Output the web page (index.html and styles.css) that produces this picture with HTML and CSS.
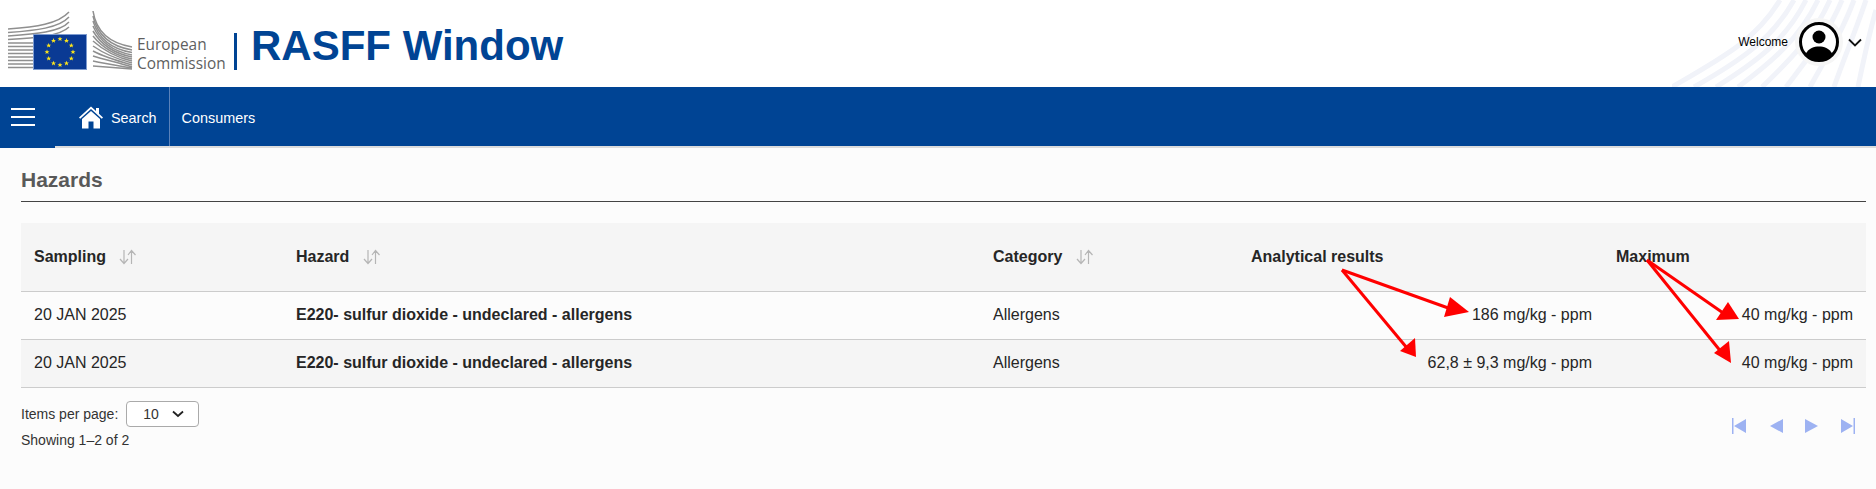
FILE: index.html
```html
<!DOCTYPE html>
<html lang="en">
<head>
  <meta charset="UTF-8">
  <title>RASFF Window</title>
  <link rel="stylesheet" href="styles.css">
</head>
<body>
  <header class="top">
    <svg class="swoosh" width="204" height="87" viewBox="0 0 204 87" fill="none">
      <path d="M0 87 C50 58 84 40 108 0"/>
      <path d="M22 87 C66 62 100 40 122 0"/>
      <path d="M44 87 C84 62 114 40 134 0"/>
      <path d="M66 87 C100 62 128 38 146 0"/>
      <path d="M90 87 C118 60 142 36 158 0"/>
      <path d="M114 87 C136 58 156 34 170 0"/>
      <path d="M138 87 C154 58 170 32 182 0"/>
      <path d="M162 87 C172 58 184 30 194 0"/>
      <path d="M186 87 C192 58 198 30 204 10"/>
    </svg>
    <div class="brand">
      <svg class="ec-logo" width="125" height="62" viewBox="0 0 125 62" fill="none">
        <g class="ec-lines">
          <path d="M0 18 C28 16 50 13 61 1"/>
          <path d="M0 21.5 C28 19.5 51 17 61 6"/>
          <path d="M0 25 C28 23 52 21 61 11"/>
          <path d="M0 28.5 C28 27 52 25 61 16"/>
          <path d="M0 32 H25"/>
          <path d="M0 35.5 H25"/>
          <path d="M0 39 H25"/>
          <path d="M0 42.5 H25"/>
          <path d="M0 46 H25"/>
          <path d="M0 49.5 H25"/>
          <path d="M0 53 H25"/>
          <path d="M0 56.5 H25"/>
          <path d="M85 0 C88 20 100 32 124 36"/>
          <path d="M85 5 C89 23 101 35 124 39"/>
          <path d="M85 10 C90 26 102 38 124 41.5"/>
          <path d="M85 15 C91 29 103 40 124 44"/>
          <path d="M85 20 C92 32 104 42 124 46"/>
          <path d="M85 25 C93 35 105 44 124 48"/>
          <path d="M85 30 C94 38 106 46 124 50"/>
          <path d="M85 35 C95 42 108 48 124 52"/>
          <path d="M85 40 C96 46 110 50 124 54"/>
          <path d="M85 45 C98 49 112 52 124 56"/>
          <path d="M85 50 C98 53 112 55 124 57"/>
          <path d="M85 55 C98 56 112 57 124 58"/>
        </g>
        <rect class="ec-flag" x="25.5" y="23.5" width="53" height="35"/>
        <defs>
          <polygon id="star" points="0,-2.6 .7,-.8 2.5,-.8 1.1,.3 1.6,2.1 0,1 -1.6,2.1 -1.1,.3 -2.5,-.8 -.7,-.8"/>
        </defs>
        <g class="ec-stars" transform="translate(52 41)">
          <use href="#star" x="0" y="-13"/>
          <use href="#star" x="6.5" y="-11.3"/>
          <use href="#star" x="11.3" y="-6.5"/>
          <use href="#star" x="13" y="0"/>
          <use href="#star" x="11.3" y="6.5"/>
          <use href="#star" x="6.5" y="11.3"/>
          <use href="#star" x="0" y="13"/>
          <use href="#star" x="-6.5" y="11.3"/>
          <use href="#star" x="-11.3" y="6.5"/>
          <use href="#star" x="-13" y="0"/>
          <use href="#star" x="-11.3" y="-6.5"/>
          <use href="#star" x="-6.5" y="-11.3"/>
        </g>
      </svg>
      <div class="ec-name">European<br>Commission</div>
      <div class="brand-rule"></div>
      <div class="app-title">RASFF Window</div>
    </div>
    <div class="user">
      <span class="welcome">Welcome</span>
      <svg class="avatar" width="48" height="48" viewBox="0 0 48 48">
        <circle cx="24" cy="24" r="24" fill="#f6f6f6"/>
        <circle cx="24" cy="24" r="18.5" fill="#fff" stroke="#000" stroke-width="3"/>
        <circle cx="24" cy="19" r="6.5" fill="#000"/>
        <path d="M10.5 36 C14 30 19 28.5 24 28.5 C29 28.5 34 30 37.5 36 C34 40 29 42 24 42 C19 42 14 40 10.5 36 Z" fill="#000"/>
      </svg>
      <svg class="user-caret" width="14" height="9" viewBox="0 0 14 9" fill="none">
        <path d="M1 1.5 L7 7.5 L13 1.5"/>
      </svg>
    </div>
  </header>

  <nav class="nav">
    <div class="nav-burger">
      <span></span><span></span><span></span>
    </div>
    <a class="nav-item nav-home">
      <svg width="24" height="24" viewBox="0 0 24 24">
        <path d="M12 1.5 L17 6 V3 H20 V8.8 L24 12.6 L22.8 13.8 L12 4 L1.2 13.8 L0 12.6 Z" fill="#fff"/>
        <path d="M12 6 L21 14 V23.5 H14.5 V16.5 H9.5 V23.5 H3 V14 Z" fill="#fff"/>
      </svg>
      Search
    </a>
    <a class="nav-item">Consumers</a>
  </nav>

  <main class="content">
    <h2 class="section-title">Hazards</h2>

    <div class="table-wrap">
      <table class="hazards">
        <thead>
          <tr>
            <th class="col-sampling">Sampling <svg class="sort" width="18" height="16" viewBox="0 0 18 16" fill="none"><path d="M5 1 V14 M1 10 L5 14.5 L9 10 M12.5 15 V2 M9 6 L12.5 1.5 L16.5 6"/></svg></th>
            <th class="col-hazard">Hazard <svg class="sort" width="18" height="16" viewBox="0 0 18 16" fill="none"><path d="M5 1 V14 M1 10 L5 14.5 L9 10 M12.5 15 V2 M9 6 L12.5 1.5 L16.5 6"/></svg></th>
            <th class="col-category">Category <svg class="sort" width="18" height="16" viewBox="0 0 18 16" fill="none"><path d="M5 1 V14 M1 10 L5 14.5 L9 10 M12.5 15 V2 M9 6 L12.5 1.5 L16.5 6"/></svg></th>
            <th class="col-result">Analytical results</th>
            <th class="col-max">Maximum</th>
          </tr>
        </thead>
        <tbody>
          <tr>
            <td>20 JAN 2025</td>
            <td class="hazard-name">E220- sulfur dioxide - undeclared - allergens</td>
            <td>Allergens</td>
            <td class="num num-result">186 mg/kg - ppm</td>
            <td class="num">40 mg/kg - ppm</td>
          </tr>
          <tr class="alt">
            <td>20 JAN 2025</td>
            <td class="hazard-name">E220- sulfur dioxide - undeclared - allergens</td>
            <td>Allergens</td>
            <td class="num num-result">62,8 ± 9,3 mg/kg - ppm</td>
            <td class="num">40 mg/kg - ppm</td>
          </tr>
        </tbody>
      </table>

      <!-- annotation drawn over the table, coordinates are relative to the table corner -->
      <svg class="arrows" width="1845" height="164" viewBox="0 0 1845 164">
        <g class="arrow-lines">
          <path d="M1321 47 L1430 86"/>
          <path d="M1321 47 L1386 125"/>
          <path d="M1626 37 L1705 92"/>
          <path d="M1626 37 L1701 130"/>
        </g>
        <polygon points="1448,89 1423,94 1429,74"/>
        <polygon points="1395,134 1379,128 1394,115"/>
        <polygon points="1718,96 1695,97 1707,79"/>
        <polygon points="1710,140 1693,130 1708,118"/>
      </svg>
    </div>

    <div class="pager">
      <div class="pager-info">
        <div class="per-page">
          <span>Items per page:</span>
          <div class="select">
            10
            <svg width="12" height="8" viewBox="0 0 12 8" fill="none"><path d="M1 1.5 L6 6 L11 1.5"/></svg>
          </div>
        </div>
        <div class="showing">Showing 1–2 of 2</div>
      </div>
      <div class="pager-nav">
        <svg width="15" height="16" viewBox="0 0 15 16"><path d="M0 0 H1.5 V16 H0 Z M14 1 V15 L2 8 Z"/></svg>
        <svg width="14" height="16" viewBox="0 0 14 16"><path d="M14 1 V15 L1 8 Z"/></svg>
        <svg width="14" height="16" viewBox="0 0 14 16"><path d="M0 1 V15 L13 8 Z"/></svg>
        <svg width="14" height="16" viewBox="0 0 14 16"><path d="M12.5 0 H14 V16 H12.5 Z M0 1 V15 L12 8 Z"/></svg>
      </div>
    </div>
  </main>
</body>
</html>
```

FILE: styles.css
```css
* {
  box-sizing: border-box;
}
body {
  margin: 0;
  font-family: "Liberation Sans", Arial, sans-serif;
  background-color: #fcfcfc;
  color: #262626;
}

/* header */
.top {
  height: 87px;
  background-color: #fff;
  position: relative;
  display: flex;
  justify-content: space-between;
  align-items: flex-start;
  overflow: hidden;
}
.swoosh {
  position: absolute;
  right: 0;
  top: 0;
}
.swoosh path {
  stroke: #f1f3f9;
  stroke-width: 5;
}
.brand {
  display: flex;
  align-items: flex-start;
  padding: 11px 0 0 8px;
}
.ec-lines path {
  stroke: #8f8f8f;
  stroke-width: 1.5;
}
.ec-flag {
  fill: #0a3a94;
  stroke: #7d9bd0;
  stroke-width: 1;
}
.ec-stars {
  fill: #ffe619;
}
.ec-name {
  margin: 24px 0 0 4px;
  width: 97px;
  font-family: "Open Sans", sans-serif;
  font-size: 15.4px;
  line-height: 19px;
  color: #5f5f5f;
}
.brand-rule {
  width: 3px;
  height: 37px;
  margin-top: 22px;
  background-color: #004494;
}
.app-title {
  margin: 10px 0 0 14px;
  font-size: 42px;
  line-height: 50px;
  font-weight: bold;
  color: #004494;
}
.user {
  position: relative;
  display: flex;
  align-items: center;
  padding: 18px 14px 0 0;
}
.welcome {
  font-size: 12px;
  color: #000;
  margin-right: 7px;
}
.user-caret {
  margin-left: 5px;
}
.user-caret path {
  stroke: #111;
  stroke-width: 1.8;
}

/* nav bar */
.nav {
  height: 61px;
  background-color: #004494;
  border-bottom: 2px solid #dcdcdc;
  display: flex;
  align-items: stretch;
  color: #fff;
  font-size: 14.4px;
}
.nav-burger {
  width: 55px;
  margin-bottom: -2px;
  border-bottom: 2px solid #004494;
  padding: 21px 0 0 11px;
}
.nav-burger span {
  display: block;
  width: 24px;
  height: 2px;
  margin-bottom: 6px;
  background-color: #fff;
}
.nav-item {
  display: flex;
  align-items: center;
  padding: 2px 12px 0 12px;
}
.nav-home {
  padding-left: 24px;
  gap: 8px;
  border-right: 1px solid #5a82ba;
}
.nav-home svg {
  margin-top: -2px;
}

/* hazards block */
.content {
  padding: 0 10px 0 21px;
}
.section-title {
  margin: 0;
  padding: 20px 0 8px;
  height: 54px;
  font-size: 21px;
  line-height: 24px;
  color: #595959;
  border-bottom: 1px solid #444;
}
.table-wrap {
  position: relative;
  margin-top: 21px;
}
.hazards {
  width: 100%;
  border-collapse: collapse;
  table-layout: fixed;
  font-size: 16px;
}
.hazards th {
  height: 68px;
  text-align: left;
  font-weight: bold;
  padding: 0 13px;
  background-color: #f5f5f5;
  border-bottom: 1px solid #ccc;
}
.hazards td {
  height: 48px;
  padding: 0 13px;
  border-bottom: 1px solid #ccc;
}
.hazards .alt td {
  background-color: #f5f5f5;
}
.col-sampling {
  width: 262px;
}
.col-hazard {
  width: 697px;
}
.col-category {
  width: 258px;
}
.col-result {
  width: 365px;
}
.hazard-name {
  font-weight: bold;
}
.hazards .num {
  text-align: right;
}
.hazards .num-result {
  padding-right: 11px;
}
.sort {
  margin-left: 9px;
  vertical-align: -3px;
}
.sort path {
  stroke: #b5b5b5;
  stroke-width: 1.2;
}
.arrows {
  position: absolute;
  left: 0;
  top: 0;
  fill: #f00;
}
.arrow-lines path {
  stroke: #f00;
  stroke-width: 3;
}

/* pager */
.pager {
  display: flex;
  justify-content: space-between;
  font-size: 14px;
  color: #333;
}
.per-page {
  display: flex;
  align-items: center;
  gap: 8px;
  margin-top: 13px;
}
.select {
  width: 73px;
  height: 26px;
  border: 1px solid #aaa;
  border-radius: 4px;
  display: flex;
  align-items: center;
  justify-content: space-between;
  padding: 0 14px 0 16px;
  background-color: #fff;
}
.select path {
  stroke: #222;
  stroke-width: 1.8;
}
.showing {
  margin-top: 5px;
}
.pager-nav {
  display: flex;
  gap: 22px;
  margin: 30px 11px 0 0;
  fill: #9db2f2;
}
```
